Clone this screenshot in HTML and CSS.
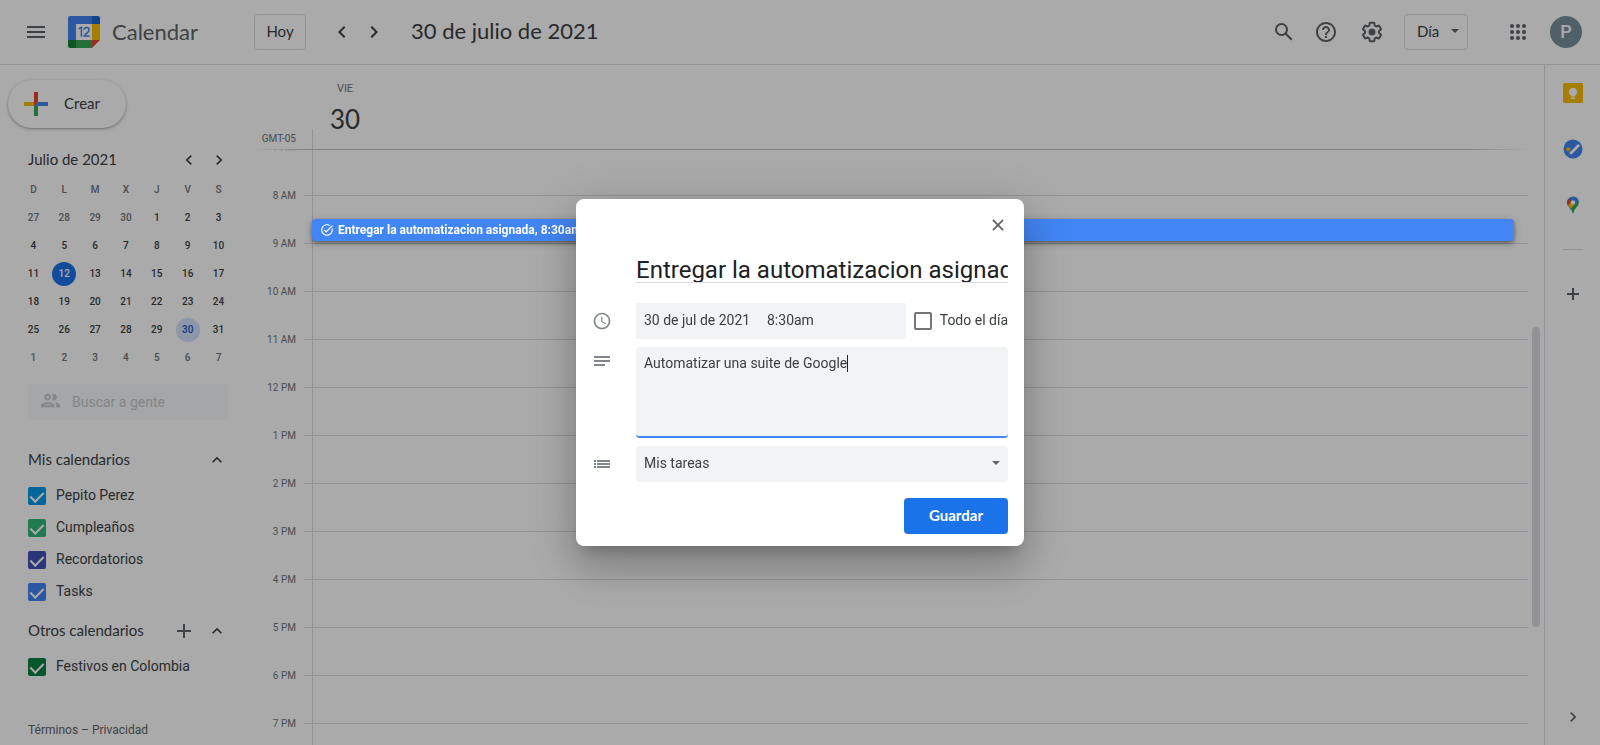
FILE: index.html
```html
<!DOCTYPE html>
<html lang="es">
<head>
<meta charset="utf-8">
<meta name="viewport" content="width=device-width, initial-scale=1">
<title>Calendar - 30 de julio de 2021</title>
<link rel="stylesheet" href="styles.css">
</head>
<body>
<div class="app">
  <header class="topbar">
    <button class="icon-btn menu-btn" aria-label="Menú principal">
      <svg width="24" height="24" viewBox="0 0 24 24"><path d="M3 18h18v-2H3zM3 13h18v-2H3zM3 6v2h18V6z"/></svg>
    </button>
    <a class="brand" href="#">
      <svg class="logo" width="32" height="32" viewBox="0 0 32 32">
        <path d="M2 0h22v8H8v16H0V2a2 2 0 0 1 2-2z" fill="#4285f4"/>
        <path d="M24 0h6a2 2 0 0 1 2 2v6h-8z" fill="#1967d2"/>
        <path d="M24 8h8v16h-8z" fill="#fbbc04"/>
        <path d="M8 24h16v8H8z" fill="#34a853"/>
        <path d="M0 24h8v8H2a2 2 0 0 1-2-2z" fill="#188038"/>
        <path d="M24 24h8l-8 8z" fill="#ea4335"/>
        <path d="M8 8h16v16H8z" fill="#fff"/>
        <path d="M10.600 12.900l2.800-1.600v9.400M16 13.700c.2-3 5.100-2.900 5.100 0 0 2.300-3.200 3.800-4.800 6.200h5.400" fill="none" stroke="#4285f4" stroke-width="1.500"/>
      </svg>
      <span class="brand-name">Calendar</span>
    </a>
    <button class="outlined-btn today-btn">Hoy</button>
    <div class="pager">
      <button class="icon-btn" aria-label="Día anterior"><svg width="24" height="24" viewBox="0 0 24 24"><path d="M15.400 7.400 14 6l-6 6 6 6 1.400-1.400L10.800 12z"/></svg></button>
      <button class="icon-btn" aria-label="Día siguiente"><svg width="24" height="24" viewBox="0 0 24 24"><path d="M10 6 8.600 7.400 13.200 12l-4.600 4.600L10 18l6-6z"/></svg></button>
    </div>
    <h1 class="current-date">30 de julio de 2021</h1>
    <div class="tools">
      <button class="icon-btn" aria-label="Buscar"><svg width="24" height="24" viewBox="0 0 24 24"><path d="M20.490 19l-5.730-5.730C15.530 12.200 16 10.910 16 9.500A6.500 6.500 0 1 0 9.500 16c1.410 0 2.700-.470 3.770-1.240L19 20.490 20.490 19zM5 9.500C5 7.010 7.010 5 9.500 5S14 7.010 14 9.500 11.990 14 9.500 14 5 11.990 5 9.500z"/></svg></button>
      <button class="icon-btn" aria-label="Ayuda"><svg width="24" height="24" viewBox="0 0 24 24"><path d="M11 18h2v-2h-2v2zm1-16C6.480 2 2 6.480 2 12s4.480 10 10 10 10-4.480 10-10S17.520 2 12 2zm0 18c-4.410 0-8-3.590-8-8s3.590-8 8-8 8 3.590 8 8-3.590 8-8 8zm0-14c-2.210 0-4 1.790-4 4h2c0-1.100.9-2 2-2s2 .9 2 2c0 2-3 1.750-3 5h2c0-2.250 3-2.500 3-5 0-2.210-1.790-4-4-4z"/></svg></button>
      <button class="icon-btn settings-btn" aria-label="Configuración"><svg width="24" height="24" viewBox="0 0 24 24"><path d="M13.850 22.250h-3.700c-.740 0-1.360-.540-1.450-1.270l-.270-1.890c-.270-.140-.530-.290-.790-.460l-1.800.720c-.7.260-1.470-.030-1.810-.650L2.200 15.530c-.350-.660-.2-1.440.360-1.880l1.530-1.190c-.010-.150-.020-.3-.020-.460 0-.150.010-.310.020-.460l-1.520-1.190c-.590-.450-.740-1.260-.370-1.880l1.850-3.190c.340-.620 1.110-.9 1.790-.630l1.810.730c.260-.170.520-.320.780-.460l.270-1.910c.090-.7.710-1.250 1.440-1.250h3.700c.740 0 1.360.540 1.450 1.270l.270 1.890c.270.140.530.290.790.460l1.800-.720c.710-.260 1.480.030 1.820.650l1.840 3.180c.360.660.2 1.440-.360 1.880l-1.520 1.190c.010.150.020.3.020.460s-.010.310-.020.460l1.520 1.190c.560.450.720 1.230.370 1.860l-1.860 3.220c-.340.620-1.110.9-1.800.630l-1.800-.720c-.260.170-.520.320-.780.460l-.270 1.910c-.1.680-.720 1.220-1.460 1.220zm-3.230-2h2.760l.370-2.550.530-.220c.440-.180.880-.440 1.340-.780l.450-.340 2.380.960 1.380-2.400-2.030-1.580.070-.560c.030-.260.060-.510.060-.780s-.030-.530-.060-.780l-.070-.560 2.030-1.580-1.390-2.400-2.390.960-.450-.350c-.420-.320-.870-.580-1.330-.770l-.520-.220-.370-2.550h-2.760l-.370 2.550-.530.210c-.440.190-.880.440-1.340.790l-.450.330-2.380-.950-1.390 2.390 2.030 1.580-.070.560a7 7 0 0 0-.060.790c0 .260.020.530.060.780l.070.560-2.030 1.580 1.380 2.400 2.390-.960.450.350c.430.330.860.580 1.330.770l.530.220.380 2.550z"/><circle cx="12" cy="12" r="3.500"/></svg></button>
      <button class="outlined-btn view-btn">Día <span class="arrow"></span></button>
      <button class="icon-btn apps-btn" aria-label="Aplicaciones de Google"><svg width="24" height="24" viewBox="0 0 24 24"><circle cx="6" cy="6" r="2"/><circle cx="12" cy="6" r="2"/><circle cx="18" cy="6" r="2"/><circle cx="6" cy="12" r="2"/><circle cx="12" cy="12" r="2"/><circle cx="18" cy="12" r="2"/><circle cx="6" cy="18" r="2"/><circle cx="12" cy="18" r="2"/><circle cx="18" cy="18" r="2"/></svg></button>
      <button class="avatar" aria-label="Cuenta">P</button>
    </div>
  </header>

  <div class="content">
    <aside class="sidebar">
      <button class="create-btn">
        <svg width="36" height="36" viewBox="0 0 36 36"><path fill="#34a853" d="M16 16v14h4V20z"/><path fill="#4285f4" d="M30 16H20l-4 4h14z"/><path fill="#fbbc04" d="M6 16v4h10l4-4z"/><path fill="#ea4335" d="M20 16V6h-4v14z"/></svg>
        <span>Crear</span>
      </button>

      <section class="mini">
        <div class="mini-head">
          <h2>Julio de 2021</h2>
          <button class="small-btn" aria-label="Mes anterior"><svg width="20" height="20" viewBox="0 0 24 24"><path d="M15.400 7.400 14 6l-6 6 6 6 1.400-1.400L10.800 12z"/></svg></button>
          <button class="small-btn" aria-label="Mes siguiente"><svg width="20" height="20" viewBox="0 0 24 24"><path d="M10 6 8.600 7.400 13.200 12l-4.600 4.600L10 18l6-6z"/></svg></button>
        </div>
        <table class="month">
          <thead><tr><th>D</th><th>L</th><th>M</th><th>X</th><th>J</th><th>V</th><th>S</th></tr></thead>
          <tbody>
            <tr><td class="out">27</td><td class="out">28</td><td class="out">29</td><td class="out">30</td><td>1</td><td>2</td><td>3</td></tr>
            <tr><td>4</td><td>5</td><td>6</td><td>7</td><td>8</td><td>9</td><td>10</td></tr>
            <tr><td>11</td><td><span class="today">12</span></td><td>13</td><td>14</td><td>15</td><td>16</td><td>17</td></tr>
            <tr><td>18</td><td>19</td><td>20</td><td>21</td><td>22</td><td>23</td><td>24</td></tr>
            <tr><td>25</td><td>26</td><td>27</td><td>28</td><td>29</td><td><span class="picked">30</span></td><td>31</td></tr>
            <tr><td class="out">1</td><td class="out">2</td><td class="out">3</td><td class="out">4</td><td class="out">5</td><td class="out">6</td><td class="out">7</td></tr>
          </tbody>
        </table>
      </section>

      <label class="people">
        <svg width="23" height="23" viewBox="0 0 24 24"><path d="M9 13.750c-2.340 0-7 1.170-7 3.500V19h14v-1.750c0-2.330-4.660-3.500-7-3.500zM4.340 17c.840-.580 2.870-1.250 4.660-1.250s3.820.670 4.660 1.250H4.340zM9 12c1.930 0 3.500-1.570 3.500-3.500S10.930 5 9 5 5.500 6.570 5.500 8.500 7.070 12 9 12zm0-5c.830 0 1.500.670 1.500 1.500S9.830 10 9 10s-1.500-.670-1.500-1.500S8.170 7 9 7zm7.040 6.810c1.160.840 1.960 1.960 1.960 3.440V19h4v-1.750c0-2.020-3.500-3.170-5.960-3.440zM15 12c1.930 0 3.500-1.570 3.500-3.500S16.930 5 15 5c-.540 0-1.040.130-1.500.350.630.890 1 1.980 1 3.150s-.370 2.260-1 3.150c.460.220.960.350 1.500.350z"/></svg>
        <input type="text" placeholder="Buscar a gente" aria-label="Buscar a gente">
      </label>

      <section class="calendars">
        <div class="group-head">
          <h2>Mis calendarios</h2>
          <button class="small-btn" aria-label="Contraer"><svg width="20" height="20" viewBox="0 0 24 24"><path d="M12 8l-6 6 1.400 1.400 4.600-4.600 4.600 4.600L18 14z"/></svg></button>
        </div>
        <label class="cal"><input class="sky" type="checkbox" checked><span>Pepito Perez</span></label>
        <label class="cal"><input class="sage" type="checkbox" checked><span>Cumpleaños</span></label>
        <label class="cal"><input class="indigo" type="checkbox" checked><span>Recordatorios</span></label>
        <label class="cal"><input class="azure" type="checkbox" checked><span>Tasks</span></label>
      </section>
      <section class="calendars others">
        <div class="group-head">
          <h2>Otros calendarios</h2>
          <button class="small-btn add-btn" aria-label="Añadir otros calendarios"><svg width="20" height="20" viewBox="0 0 20 20"><path d="M9 3h2v6h6v2h-6v6H9v-6H3V9h6z"/></svg></button>
          <button class="small-btn" aria-label="Contraer"><svg width="20" height="20" viewBox="0 0 24 24"><path d="M12 8l-6 6 1.400 1.400 4.600-4.600 4.600 4.600L18 14z"/></svg></button>
        </div>
        <label class="cal"><input class="green" type="checkbox" checked><span>Festivos en Colombia</span></label>
      </section>
      <footer class="legal"><a href="#">Términos</a> – <a href="#">Privacidad</a></footer>
    </aside>

    <main class="day">
      <div class="day-head">
        <div class="zone">GMT-05</div>
        <div class="day-label"><span class="weekday">VIE</span><span class="daynum">30</span></div>
      </div>
      <div class="grid">
        <div class="hours">
          <div class="hour faded"><span class="time">7 AM</span><div class="slot"></div></div>
          <div class="hour"><span class="time">8 AM</span><div class="slot">
            <button class="event">
              <svg width="14" height="14" viewBox="0 0 24 24"><path d="M22 5.180L10.590 16.600l-4.240-4.240 1.410-1.410 2.830 2.830 10-10L22 5.180zM19.790 10.220c.130.570.210 1.170.210 1.780 0 4.420-3.580 8-8 8s-8-3.580-8-8 3.580-8 8-8c1.580 0 3.040.460 4.280 1.250l1.440-1.440A9.900 9.900 0 0 0 12 2C6.480 2 2 6.480 2 12s4.480 10 10 10 10-4.480 10-10c0-1.190-.220-2.330-.6-3.390l-1.610 1.610z"/></svg>
              Entregar la automatizacion asignada, 8:30am
            </button></div></div>
          <div class="hour"><span class="time">9 AM</span><div class="slot"></div></div>
          <div class="hour"><span class="time">10 AM</span><div class="slot"></div></div>
          <div class="hour"><span class="time">11 AM</span><div class="slot"></div></div>
          <div class="hour"><span class="time">12 PM</span><div class="slot"></div></div>
          <div class="hour"><span class="time">1 PM</span><div class="slot"></div></div>
          <div class="hour"><span class="time">2 PM</span><div class="slot"></div></div>
          <div class="hour"><span class="time">3 PM</span><div class="slot"></div></div>
          <div class="hour"><span class="time">4 PM</span><div class="slot"></div></div>
          <div class="hour"><span class="time">5 PM</span><div class="slot"></div></div>
          <div class="hour"><span class="time">6 PM</span><div class="slot"></div></div>
          <div class="hour"><span class="time">7 PM</span><div class="slot"></div></div>
        </div>
        <div class="track"><div class="thumb"></div></div>
      </div>
    </main>

    <aside class="panel">
      <button class="panel-btn" aria-label="Keep"><svg width="20" height="20" viewBox="0 0 20 20"><rect width="20" height="20" rx="1.500" fill="#fbbc04"/><circle cx="10" cy="9" r="4.200" fill="#fff"/><path d="M8 10h4v3.500H8zM8 14.500h4V16H8z" fill="#fff"/></svg></button>
      <button class="panel-btn" aria-label="Tasks"><svg width="20" height="20" viewBox="0 0 20 20"><circle cx="10" cy="10" r="9.500" fill="#4285f4"/><path d="M8 14l7.300-7.300" stroke="#fff" stroke-width="2.800" stroke-linecap="round"/><circle cx="5.200" cy="10.300" r="2.100" fill="#fbbc04"/></svg></button>
      <button class="panel-btn" aria-label="Maps"><svg width="20" height="20" viewBox="0 0 20 20"><path d="M10 1.500a6 6 0 0 1 5.700 4.200L8 15C6 12 4 10.500 4 7.500a6 6 0 0 1 6-6z" fill="#4285f4"/><path d="M5.300 3.800L8.700 6.500 5 11a7 7 0 0 1 .3-7.200z" fill="#ea4335"/><path d="M11.800 9.200L8 13.800C6.800 12.200 5.600 11.500 5 10.500l3.500-4.100z" fill="#fbbc04"/><path d="M15.600 5.500c1.700 5.200-4.100 7-4.900 12.100-.2.900-1.200.9-1.400 0-.3-1.600-.8-2.700-1.600-3.800z" fill="#34a853"/><circle cx="10" cy="7.500" r="2.200" fill="#fff"/></svg></button>
      <hr class="panel-rule">
      <button class="panel-btn" aria-label="Obtener complementos"><svg width="20" height="20" viewBox="0 0 20 20"><path d="M9 4h2v5h5v2h-5v5H9v-5H4V9h5z"/></svg></button>
      <button class="panel-btn collapse" aria-label="Ocultar panel lateral"><svg width="20" height="20" viewBox="0 0 24 24"><path d="M10 6 8.600 7.400 13.200 12l-4.600 4.600L10 18l6-6z"/></svg></button>
    </aside>
  </div>
</div>

<div class="scrim"></div>

<div class="stage">
  <form class="dialog" role="dialog" aria-label="Editar tarea">
    <div class="dialog-head">
      <button class="close-btn" type="button" aria-label="Cerrar"><svg width="20" height="20" viewBox="0 0 20 20"><path d="M4.300 5.500l1.200-1.200 4.500 4.500 4.500-4.500 1.200 1.200-4.500 4.500 4.500 4.500-1.200 1.200-4.500-4.500-4.500 4.500-1.200-1.200L8.800 10z"/></svg></button>
    </div>
    <input class="title" type="text" value="Entregar la automatizacion asignada" aria-label="Título">
    <svg class="row-icon" width="20" height="20" viewBox="0 0 24 24"><path d="M11.990 2C6.470 2 2 6.480 2 12s4.470 10 9.990 10C17.520 22 22 17.520 22 12S17.520 2 11.990 2zM12 20c-4.420 0-8-3.580-8-8s3.580-8 8-8 8 3.580 8 8-3.580 8-8 8zm.5-13H11v6l5.250 3.150.750-1.230-4.500-2.670z"/></svg>
    <div class="when">
      <div class="when-fields">
        <input class="date" type="text" value="30 de jul de 2021" aria-label="Fecha">
        <input class="hour-field" type="text" value="8:30am" aria-label="Hora">
      </div>
      <label class="all-day"><input type="checkbox"><span>Todo el día</span></label>
    </div>
    <svg class="row-icon top" width="20" height="20" viewBox="0 0 20 20"><path d="M2 5h16v2H2zM2 9h16v2H2zM2 13h11v2H2z"/></svg>
    <div class="notes-box">
      <textarea class="notes" aria-label="Descripción">Automatizar una suite de Google</textarea>
      <span class="caret"></span>
    </div>
    <svg class="row-icon" width="20" height="20" viewBox="0 0 20 20"><path d="M2 6h2v2H2zM5 6h13v2H5zM2 9h2v2H2zM5 9h13v2H5zM2 12h2v2H2zM5 12h13v2H5z"/></svg>
    <div class="list-box">
      <select class="list" aria-label="Lista"><option>Mis tareas</option></select>
      <span class="arrow"></span>
    </div>
    <button class="save" type="submit">Guardar</button>
  </form>
</div>
</body>
</html>
```

FILE: styles.css
```css
:root {
  --text: #3c4043;
  --muted: #70757a;
  --icon: #5f6368;
  --line: #dadce0;
  --field: #f1f3f4;
  --brand-font: Lato, "Open Sans", sans-serif;
}

* { box-sizing: border-box; }

body {
  margin: 0;
  background: #fff;
  color: var(--text);
  font: 14px/20px Roboto, "Liberation Sans", sans-serif;
}

button, input, select, textarea { font: inherit; color: inherit; }
button { padding: 0; border: 0; background: none; cursor: pointer; }
input, textarea, select { outline: 0; }
h1, h2 { margin: 0; font-weight: 400; }
a { color: inherit; text-decoration: none; }
svg { display: block; fill: currentColor; flex: none; }

.app { height: 100vh; display: flex; flex-direction: column; overflow: hidden; }

/* Top bar */
.topbar {
  flex: none;
  height: 65px;
  display: flex;
  align-items: center;
  padding: 0 18px 1px 16px;
  border-bottom: 1px solid var(--line);
}
.icon-btn {
  width: 40px;
  height: 40px;
  display: grid;
  place-items: center;
  color: var(--icon);
}
.brand { display: flex; align-items: center; gap: 12px; width: 186px; margin-left: 12px; }
.brand-name { font: 22px/32px var(--brand-font); color: var(--icon); }
.outlined-btn {
  height: 36px;
  padding-bottom: 2px;
  border: 1px solid var(--line);
  border-radius: 4px;
  font: 15px/20px var(--brand-font);
}
.today-btn { width: 52px; }
.pager { display: flex; margin-left: 20px; }
.pager .icon-btn { width: 32px; color: var(--text); }
.current-date { margin-left: 21px; padding-bottom: 2px; font: 22px/32px var(--brand-font); }
.tools { display: flex; align-items: center; gap: 2px; margin-left: auto; }
.settings-btn { margin-left: 4px; }
.view-btn {
  display: flex;
  align-items: center;
  justify-content: space-between;
  width: 64px;
  margin: 0 28px 0 10px;
  padding: 0 8px 2px 12px;
}
.arrow { border: 4px solid transparent; border-top-color: var(--icon); border-bottom: 0; }
.avatar {
  width: 32px;
  height: 32px;
  margin-left: 10px;
  border-radius: 50%;
  background: #78909c;
  color: #fff;
  font-size: 18px;
  font-weight: 500;
}

.content { flex: 1; min-height: 0; display: flex; }

/* Sidebar */
.sidebar { width: 256px; flex: none; padding-top: 15px; }
.create-btn {
  display: flex;
  align-items: center;
  gap: 10px;
  height: 48px;
  margin-left: 8px;
  padding: 0 26px 0 10px;
  border-radius: 24px;
  box-shadow: 0 1px 2px rgba(60, 64, 67, .3), 0 1px 3px 1px rgba(60, 64, 67, .15);
  font: 15px/20px var(--brand-font);
}
.create-btn span { padding-bottom: 2px; }
.mini { margin-top: 16px; }
.mini-head, .group-head { display: flex; align-items: center; height: 32px; padding: 0 24px 0 28px; }
.mini-head { padding-right: 22px; }
.mini-head h2, .group-head h2 { flex: 1; padding-bottom: 2px; font: 15px/20px var(--brand-font); }
.small-btn { width: 30px; height: 30px; display: grid; place-items: center; color: var(--text); }
.add-btn { width: 36px; color: var(--icon); }
.month {
  width: 216px;
  margin-left: 18px;
  border-collapse: collapse;
  table-layout: fixed;
  font-size: 10px;
  font-weight: 500;
  text-align: center;
}
.month th, .month td { height: 28px; padding: 0; }
.month th { color: var(--muted); font-weight: 500; }
.month .out { color: var(--muted); }
.month span { display: block; width: 24px; margin: auto; border-radius: 50%; line-height: 24px; }
.month .today { background: #1a73e8; color: #fff; }
.month .picked { background: #d2e3fc; color: #185abc; }
.people {
  display: flex;
  align-items: center;
  gap: 10px;
  height: 36px;
  margin: 12px 28px 0;
  padding-left: 11px;
  border-radius: 4px;
  background: rgba(232, 234, 246, .3);
  color: #c6c8cb;
}
.people svg { margin-bottom: 3px; }
.people input { width: 100%; min-width: 0; padding: 0; border: 0; background: none; }
.people input::placeholder { color: #c6c8cb; opacity: 1; }
.calendars { margin-top: 24px; }
.calendars.others { margin-top: 7px; }
.group-head { margin-bottom: 4px; }
.cal { display: flex; align-items: center; gap: 10px; height: 32px; padding-left: 28px; }
.cal span, .all-day span { padding-bottom: 2px; }
.cal input {
  appearance: none;
  width: 18px;
  height: 18px;
  margin: 0;
  border-radius: 2px;
  display: grid;
  place-items: center;
}
.cal input::after {
  content: "";
  width: 6px;
  height: 11px;
  margin-bottom: 2px;
  border: solid #fff;
  border-width: 0 2px 2px 0;
  transform: rotate(45deg);
}
.sky { background: #039be5; }
.sage { background: #33b679; }
.indigo { background: #3f51b5; }
.azure { background: #4285f4; }
.green { background: #0b8043; }
.legal { margin: 37px 0 0 28px; color: var(--icon); font-size: 12px; }

/* Day view */
.day { flex: 1; min-width: 0; display: flex; flex-direction: column; }
.day-head {
  flex: none;
  height: 85px;
  display: flex;
  align-items: flex-end;
  margin-right: 16px;
  border-bottom: 1px solid;
  border-image: linear-gradient(90deg, transparent, #c4c7c9 48px, #c4c7c9 calc(100% - 60px), transparent) 1;
}
.zone {
  width: 57px;
  height: 20px;
  padding-right: 16px;
  border-right: 1px solid var(--line);
  color: var(--muted);
  font-size: 10px;
  text-align: right;
  white-space: nowrap;
}
.day-label { display: flex; flex-direction: column; align-items: center; gap: 6px; width: 64px; padding-bottom: 14px; }
.weekday { color: var(--muted); font-size: 11px; line-height: 16px; }
.daynum { font: 26px/32px var(--brand-font); }
.grid { flex: 1; min-height: 0; display: flex; overflow: hidden; }
.hours { flex: 1; margin-top: -3px; }
.hour { display: flex; height: 48px; }
.time {
  width: 40px;
  margin: -9px 8px 0 0;
  color: var(--muted);
  font-size: 10px;
  text-align: right;
}
.faded .time { color: #c4c7ca; }
.slot {
  position: relative;
  flex: 1;
  padding-left: 8px;
  border-top: 1px solid var(--line);
}
.slot::before { content: ""; display: block; width: 1px; height: 48px; background: var(--line); }
.event {
  position: absolute;
  z-index: 2;
  inset: 23px 14px auto 8px;
  display: flex;
  align-items: center;
  gap: 4px;
  height: 22px;
  padding-left: 8px;
  border-radius: 4px;
  background: #4285f4;
  box-shadow: 0 2px 4px rgba(0, 0, 0, .35), 0 2px 8px rgba(0, 0, 0, .2);
  color: #fff;
  font-size: 12px;
  font-weight: 700;
}
.track { flex: none; width: 16px; padding: 177px 4px 0; }
.thumb { height: 300px; border-radius: 4px; background: var(--line); }

/* Side panel */
.panel {
  flex: none;
  width: 56px;
  display: flex;
  flex-direction: column;
  align-items: center;
  padding-bottom: 8px;
  border-left: 1px solid var(--line);
}
.panel-btn { flex: none; width: 40px; height: 56px; display: grid; place-items: center; color: var(--icon); }
.panel-rule { width: 20px; margin: 16px 0; border: 0; border-top: 1px solid var(--line); }
.collapse { height: 40px; margin-top: auto; }

/* Task dialog */
.scrim { position: fixed; z-index: 1; inset: 0; background: rgba(0, 0, 0, .333); }
.stage { position: fixed; z-index: 3; inset: 0; display: grid; place-items: center; pointer-events: none; }
.dialog {
  width: 448px;
  display: grid;
  grid-template-columns: 36px minmax(0, 1fr);
  gap: 8px;
  padding: 0 16px 12px;
  border-radius: 8px;
  background: #fff;
  box-shadow: 0 24px 38px 3px rgba(0, 0, 0, .14), 0 9px 46px 8px rgba(0, 0, 0, .12), 0 11px 15px -7px rgba(0, 0, 0, .2);
  pointer-events: auto;
}
.dialog-head { grid-column: 1 / -1; display: flex; justify-content: flex-end; height: 44px; padding-top: 6px; }
.close-btn { width: 20px; height: 40px; display: grid; place-items: center; color: var(--icon); }
.title {
  grid-column: 2;
  width: 100%;
  height: 32px;
  margin-bottom: 12px;
  padding: 6px 0 0;
  border: 0;
  border-bottom: 1px solid var(--line);
  color: #202124;
  font-size: 24px;
}
.row-icon { align-self: center; color: #80868b; }
.row-icon.top { align-self: start; margin-top: 4px; }
.when { display: flex; gap: 8px; }
.when-fields { flex: 1; min-width: 0; display: flex; height: 36px; background: var(--field); }
.when-fields input { min-width: 0; height: 100%; padding: 0 0 2px 8px; border: 0; background: none; }
.when-fields .date { flex: none; width: 123px; }
.when-fields .hour-field { flex: 1; width: 0; }
.all-day { flex: none; display: flex; align-items: center; gap: 8px; white-space: nowrap; }
.all-day input {
  appearance: none;
  width: 18px;
  height: 18px;
  margin: 0;
  border: 2px solid #757575;
  border-radius: 2px;
}
.notes-box, .list-box { position: relative; }
.notes {
  display: block;
  width: 100%;
  height: 91px;
  padding: 6px 8px;
  border: 0;
  border-bottom: 2px solid #4285f4;
  border-radius: 4px;
  background: var(--field);
  resize: none;
}
.caret { position: absolute; left: 211px; top: 8px; width: 1px; height: 17px; background: #202124; }
.list {
  appearance: none;
  width: 100%;
  height: 36px;
  padding: 0 8px 2px;
  border: 0;
  border-radius: 4px;
  background: var(--field);
}
.list-box .arrow { position: absolute; right: 8px; top: 15px; }
.save {
  grid-column: 2;
  justify-self: end;
  width: 104px;
  height: 36px;
  margin-top: 8px;
  padding-bottom: 2px;
  border-radius: 4px;
  background: #1a73e8;
  color: #fff;
  font: 700 15px/20px var(--brand-font);
}
```
